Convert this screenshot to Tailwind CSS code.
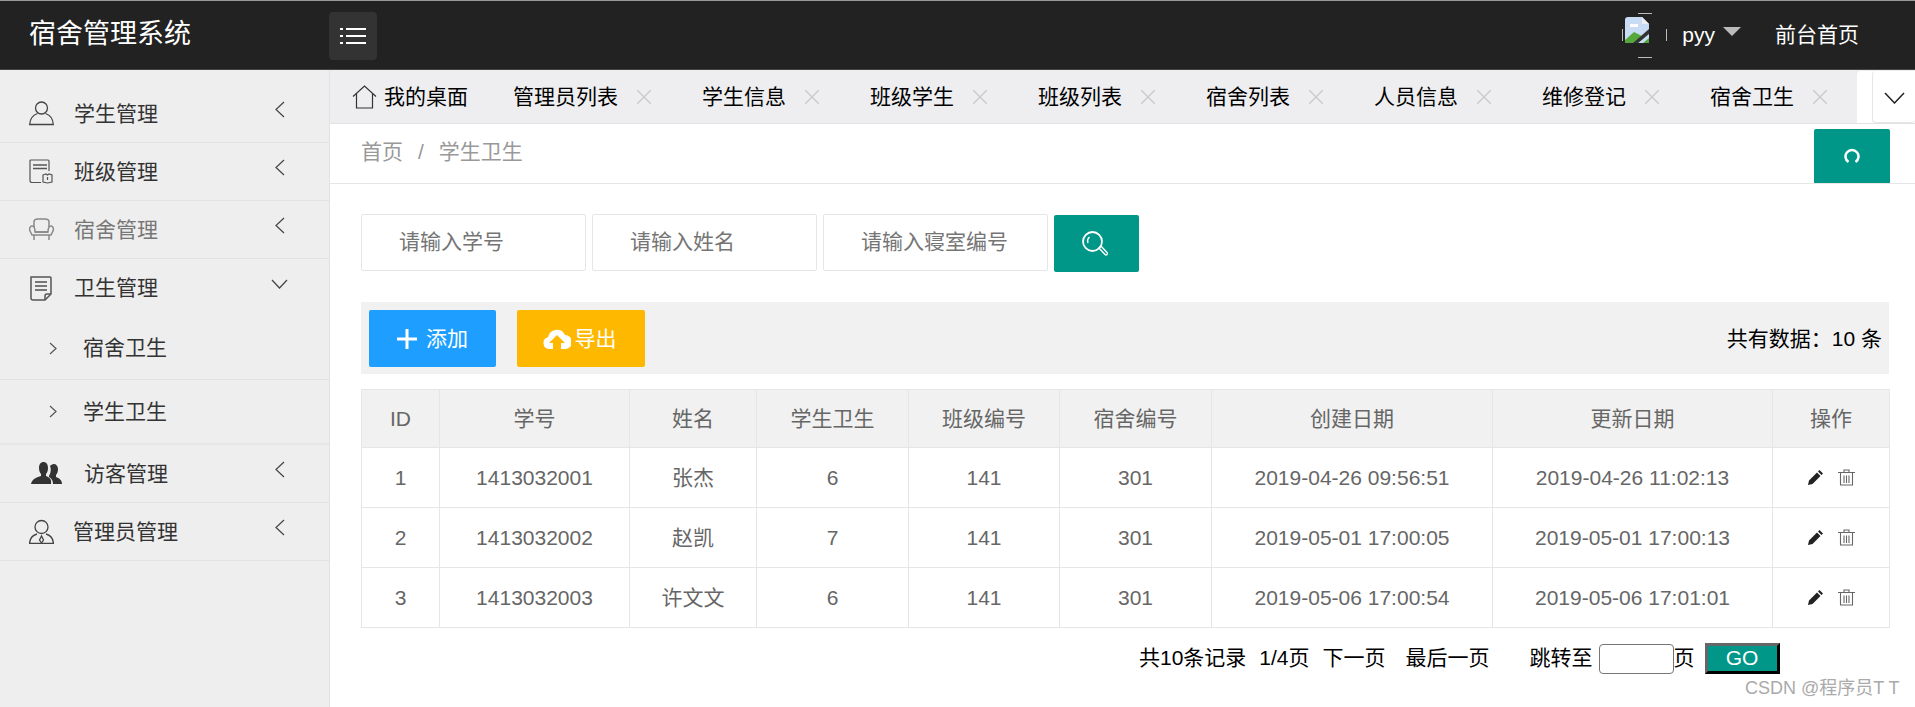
<!DOCTYPE html>
<html lang="zh-CN">
<head>
    <meta charset="UTF-8">
    <title>宿舍管理系统</title>
    <script src="https://cdn.jsdelivr.net/npm/@tailwindcss/browser@4"></script>
</head>
<body class="h-screen w-[1915px] overflow-hidden bg-white text-[21px] text-[#333] font-['Liberation_Sans','Noto_Sans_CJK_SC',sans-serif]">
    <!-- Header -->
    <header class="h-[70px] flex items-center bg-[#222] border-t border-t-[#999] border-b border-b-[#444] text-white">
        <div class="w-[329px] pl-[29px] text-[27px] leading-none mb-[2px]">宿舍管理系统</div>
        <button class="w-[48px] h-[48px] mt-[2px] rounded bg-[#333] flex items-center justify-center">
            <svg width="26" height="18" viewBox="0 0 26 18" fill="none" stroke="#fff" stroke-width="2"><path d="M0 2h3M6 2h20M0 9h3M6 9h20M0 16h3M6 16h20"/></svg>
        </button>
        <div class="ml-auto flex items-center">
            <svg width="45" height="45" viewBox="0 0 45 45" fill="none">
                <path d="M16 .5h14M16 44.500h14M.5 16v12M44.500 16v12" stroke="#bbb"/>
                <path d="M3 7q0-3 3-3h14l7 7v19H3z" fill="#c9dcf5"/>
                <path d="M8 11h8v3H8z" fill="#fff"/>
                <path d="M20 4l7 7h-7z" fill="#eee"/>
                <path d="M3 27l9-8 6 3 4 3-6 5H3z" fill="#56a83c"/>
                <path d="M27 16L11 30h5l11-9z" fill="#333"/>
                <path d="M21 30l6-5v5z" fill="#56a83c"/>
            </svg>
            <span class="ml-[15px]">pyy</span>
            <span class="ml-[8px] mb-[8px] w-0 h-0 border-x-[9px] border-x-transparent border-t-[9px] border-t-[#bbb]"></span>
            <span class="ml-[34px] mr-[56px]">前台首页</span>
        </div>
    </header>

    <div class="flex h-[637px]">
        <!-- Sidebar -->
        <aside class="w-[330px] shrink-0 pt-[15px] bg-[#eee] border-r border-r-[#e2e2e2]">
            <div class="relative h-[58px] flex items-center pl-[29px] border-b border-b-[#e2e2e2]">
                <svg class="w-[25px] h-[25px]" viewBox="0 0 25 25" fill="none" stroke="#444" stroke-width="1.3"><circle cx="12.500" cy="7" r="6"/><path d="M8.500 12.500C4 14 1 18 .7 23.500h23.600C24 18 21 14 16.500 12.500"/></svg>
                <span class="ml-[20px]">学生管理</span>
                <svg class="absolute left-[275px] top-[16px]" width="10" height="17" viewBox="0 0 10 17" fill="none" stroke="#444" stroke-width="1.2"><path d="M9 1L1 8.500 9 16"/></svg>
            </div>
            <div class="relative h-[58px] flex items-center pl-[29px] border-b border-b-[#e2e2e2]">
                <svg class="w-[25px] h-[25px]" viewBox="0 0 25 25" fill="none" stroke="#555" stroke-width="1.2"><path d="M12 23.500H3q-2 0-2-2V2q0-1 1-1h17q1 0 1 1v10"/><path d="M4 6h14M4 9.500h14" stroke-width="1.500"/><path d="M14 16l3-1 1.500 1 1.500-1 3 1v7l-4.500 1-4.500-1z"/><path d="M18.500 18v3"/></svg>
                <span class="ml-[20px]">班级管理</span>
                <svg class="absolute left-[275px] top-[16px]" width="10" height="17" viewBox="0 0 10 17" fill="none" stroke="#444" stroke-width="1.2"><path d="M9 1L1 8.500 9 16"/></svg>
            </div>
            <div class="relative h-[58px] flex items-center pl-[29px] border-b border-b-[#e2e2e2] text-[#777]">
                <svg class="w-[25px] h-[25px]" viewBox="0 0 25 25" fill="none" stroke="#888" stroke-width="1.500"><path d="M5 10V5q0-3 4-3h7q4 0 4 3v5"/><path d="M6 15c0-3-1-6-3-6s-3 3-2 5l2 4h19l2-4c1-2 0-5-2-5s-3 3-3 6z"/><path d="M6 15h13M5 18v5M20 18v5"/></svg>
                <span class="ml-[20px]">宿舍管理</span>
                <svg class="absolute left-[275px] top-[16px]" width="10" height="17" viewBox="0 0 10 17" fill="none" stroke="#444" stroke-width="1.2"><path d="M9 1L1 8.500 9 16"/></svg>
            </div>
            <div class="relative h-[58px] flex items-center pl-[29px]">
                <svg class="w-[25px] h-[25px]" viewBox="0 0 25 25" fill="none" stroke="#555" stroke-width="1.500"><path d="M2 1h19q1 0 1 1v16l-6 6H4q-2 0-2-2z"/><path d="M16 24v-4q0-2 2-2h4"/><path d="M6 6h12M6 10h12M6 14h12" stroke="#777" stroke-width="2"/></svg>
                <span class="ml-[20px]">卫生管理</span>
                <svg class="absolute left-[271px] top-[20px]" width="17" height="10" viewBox="0 0 17 10" fill="none" stroke="#444" stroke-width="1.2"><path d="M1 1l7.500 8L16 1"/></svg>
            </div>
            <div class="h-[63px] flex items-center pl-[49px] border-b border-b-[#e2e2e2]">
                <svg width="8" height="13" viewBox="0 0 8 13" fill="none" stroke="#555" stroke-width="1.2"><path d="M1 1l6 5.500L1 12"/></svg>
                <span class="ml-[26px]">宿舍卫生</span>
            </div>
            <div class="h-[65px] flex items-center pl-[49px] border-b-2 border-b-[#e6e6e6]">
                <svg width="8" height="13" viewBox="0 0 8 13" fill="none" stroke="#555" stroke-width="1.2"><path d="M1 1l6 5.500L1 12"/></svg>
                <span class="ml-[26px]">学生卫生</span>
            </div>
            <div class="relative h-[58px] flex items-center pl-[31px] border-b border-b-[#e2e2e2]">
                <svg class="w-[31px] h-[23px]" viewBox="0 0 31 23" fill="#333"><path d="M20 22c1-5-2-7-5-8v-2c1-1 2-3 2-6 0-4-2-6-4.500-6S8 2 8 6c0 3 1 5 2 6v2c-4 1-9 3-10 8z"/><path d="M22 22h9c0-4-3-6-6-7v-2c1-1 2-3 2-6s-2-5-4-5-3 1-4 2c1 2 1 5 0 8-1 1-1 2-1 3 2 1 4 3 4 7z"/></svg>
                <span class="ml-[22px]">访客管理</span>
                <svg class="absolute left-[275px] top-[16px]" width="10" height="17" viewBox="0 0 10 17" fill="none" stroke="#444" stroke-width="1.2"><path d="M9 1L1 8.500 9 16"/></svg>
            </div>
            <div class="relative h-[58px] flex items-center pl-[29px] border-b border-b-[#e2e2e2]">
                <svg class="w-[25px] h-[25px]" viewBox="0 0 25 25" fill="none" stroke="#444" stroke-width="1.3"><circle cx="12.500" cy="8" r="6.500"/><path d="M8 15c-4 1-7 4-7.500 9.500h24C24 19 21 16 17 15"/><path d="M12.500 17l-2 4 2 3 2-3z"/></svg>
                <span class="ml-[19px]">管理员管理</span>
                <svg class="absolute left-[275px] top-[16px]" width="10" height="17" viewBox="0 0 10 17" fill="none" stroke="#444" stroke-width="1.2"><path d="M9 1L1 8.500 9 16"/></svg>
            </div>
        </aside>

        <!-- Main -->
        <main class="w-[1585px]">
            <!-- Tabs -->
            <div class="relative h-[54px] flex bg-[#eeeef0] border-b border-b-[#e2e2e2] text-black">
                <div class="w-[158px] pl-[22px] flex items-center">
                    <svg width="25" height="24" viewBox="0 0 25 24" fill="none" stroke="#333" stroke-width="1.2"><path d="M1 11.500L12.500 1 24 11.500M4.500 9v14h16V9"/></svg>
                    <span class="ml-[7px]">我的桌面</span>
                </div>
                <div class="pl-[25px] pr-[26px] flex items-center"><span>管理员列表</span><svg class="ml-[19px]" width="14" height="14" viewBox="0 0 14 14" stroke="#ccc" stroke-width="1.500"><path d="M0 0l14 14M14 0L0 14"/></svg></div>
                <div class="pl-[25px] pr-[26px] flex items-center"><span>学生信息</span><svg class="ml-[19px]" width="14" height="14" viewBox="0 0 14 14" stroke="#ccc" stroke-width="1.500"><path d="M0 0l14 14M14 0L0 14"/></svg></div>
                <div class="pl-[25px] pr-[26px] flex items-center"><span>班级学生</span><svg class="ml-[19px]" width="14" height="14" viewBox="0 0 14 14" stroke="#ccc" stroke-width="1.500"><path d="M0 0l14 14M14 0L0 14"/></svg></div>
                <div class="pl-[25px] pr-[26px] flex items-center"><span>班级列表</span><svg class="ml-[19px]" width="14" height="14" viewBox="0 0 14 14" stroke="#ccc" stroke-width="1.500"><path d="M0 0l14 14M14 0L0 14"/></svg></div>
                <div class="pl-[25px] pr-[26px] flex items-center"><span>宿舍列表</span><svg class="ml-[19px]" width="14" height="14" viewBox="0 0 14 14" stroke="#ccc" stroke-width="1.500"><path d="M0 0l14 14M14 0L0 14"/></svg></div>
                <div class="pl-[25px] pr-[26px] flex items-center"><span>人员信息</span><svg class="ml-[19px]" width="14" height="14" viewBox="0 0 14 14" stroke="#ccc" stroke-width="1.500"><path d="M0 0l14 14M14 0L0 14"/></svg></div>
                <div class="pl-[25px] pr-[26px] flex items-center"><span>维修登记</span><svg class="ml-[19px]" width="14" height="14" viewBox="0 0 14 14" stroke="#ccc" stroke-width="1.500"><path d="M0 0l14 14M14 0L0 14"/></svg></div>
                <div class="pl-[25px] pr-[26px] flex items-center"><span>宿舍卫生</span><svg class="ml-[19px]" width="14" height="14" viewBox="0 0 14 14" stroke="#ccc" stroke-width="1.500"><path d="M0 0l14 14M14 0L0 14"/></svg></div>
                <div class="absolute right-0 top-[1px] h-[52px] w-[58px] bg-white flex justify-end rounded-tl">
                    <div class="w-[43px] h-full border-l border-b border-[#e6e6e6] rounded flex items-center justify-center pt-[3px]">
                        <svg width="21" height="12" viewBox="0 0 21 12" fill="none" stroke="#222" stroke-width="1.500"><path d="M1 1l9.500 10L20 1"/></svg>
                    </div>
                </div>
            </div>

            <!-- Breadcrumb -->
            <div class="relative h-[60px] flex items-center pl-[31px] pb-[4px] border-b border-b-[#e6e6e6] text-[#999]">
                <span>首页</span><span class="mx-[15px]">/</span><span>学生卫生</span>
                <a class="absolute right-[25px] top-[5px] w-[76px] h-[54px] rounded-t-[2px] bg-[#009688] flex items-center justify-center">
                    <svg width="16" height="16" viewBox="0 0 16 16" fill="none" stroke="#fff" stroke-width="2.500"><path d="M4.500 14A6.500 6.500 0 1 1 11.500 14"/></svg>
                </a>
            </div>

            <div class="pl-[31px] pr-[26px]">
                <!-- Search -->
                <div class="flex pt-[30px] gap-[6px]">
                    <div class="w-[225px] h-[57px] flex items-center pl-[37px] pb-[1px] border border-[#e6e6e6] rounded-[2px] text-[#757575]">请输入学号</div>
                    <div class="w-[225px] h-[57px] flex items-center pl-[37px] pb-[1px] border border-[#e6e6e6] rounded-[2px] text-[#757575]">请输入姓名</div>
                    <div class="w-[225px] h-[57px] flex items-center pl-[37px] pb-[1px] border border-[#e6e6e6] rounded-[2px] text-[#757575]">请输入寝室编号</div>
                    <button class="w-[85px] h-[57px] mt-[1px] rounded-[2px] bg-[#009688] flex items-center justify-center pr-[3px]">
                        <svg width="26" height="25" viewBox="0 0 26 25" fill="none" stroke="#fff"><circle cx="10.500" cy="10.500" r="9.500" stroke-width="1.800"/><path d="M6 12a5.500 5.500 0 0 1 1.500-6" stroke-width="1.500"/><path d="M17 17l2-2 6 6.500a1.400 1.400 0 0 1-2 2z" stroke-width="1.400"/></svg>
                    </button>
                </div>

                <!-- Toolbar -->
                <div class="mt-[30px] h-[72px] pl-[8px] pr-[7px] flex items-center bg-[#f1f1f1] text-black">
                    <button class="w-[127px] h-[57px] pt-[1px] rounded-[2px] bg-[#1e9fff] text-white flex items-center justify-center">
                        <svg width="20" height="20" viewBox="0 0 20 20" fill="#fff"><path d="M8.500 0h3v8.500H20v3h-8.500V20h-3v-8.500H0v-3h8.500z"/></svg>
                        <span class="ml-[9px]">添加</span>
                    </button>
                    <button class="ml-[21px] w-[128px] h-[57px] pt-[1px] pr-[3px] rounded-[2px] bg-[#ffb800] text-white flex items-center justify-center">
                        <svg width="28" height="20" viewBox="0 0 28 20" fill="#fff"><path d="M6 20a6 6 0 0 1-1-11.800A9 9 0 0 1 22 6a7 7 0 0 1 0 14h-4v-6h4l-8-8-8 8h4v6z"/></svg>
                        <span class="ml-[4px]">导出</span>
                    </button>
                    <span class="ml-auto pt-[2px]">共有数据：10 条</span>
                </div>

                <!-- Table -->
                <table class="mt-[15px] w-[1528px] table-fixed border-collapse text-[#666] text-center">
                    <colgroup>
                        <col class="w-[78px]"><col class="w-[190px]"><col class="w-[127px]"><col class="w-[152px]"><col class="w-[151px]"><col class="w-[152px]"><col class="w-[281px]"><col class="w-[280px]"><col class="w-[117px]">
                    </colgroup>
                    <thead class="bg-[#f1f1f1]">
                        <tr class="h-[58px]">
                            <th class="font-normal border border-[#e6e6e6]">ID</th>
                            <th class="font-normal border border-[#e6e6e6]">学号</th>
                            <th class="font-normal border border-[#e6e6e6]">姓名</th>
                            <th class="font-normal border border-[#e6e6e6]">学生卫生</th>
                            <th class="font-normal border border-[#e6e6e6]">班级编号</th>
                            <th class="font-normal border border-[#e6e6e6]">宿舍编号</th>
                            <th class="font-normal border border-[#e6e6e6]">创建日期</th>
                            <th class="font-normal border border-[#e6e6e6]">更新日期</th>
                            <th class="font-normal border border-[#e6e6e6]">操作</th>
                        </tr>
                    </thead>
                    <tbody>
                        <tr class="h-[60px]">
                            <td class="border border-[#e6e6e6]">1</td><td class="border border-[#e6e6e6]">1413032001</td><td class="border border-[#e6e6e6]">张杰</td><td class="border border-[#e6e6e6]">6</td><td class="border border-[#e6e6e6]">141</td><td class="border border-[#e6e6e6]">301</td><td class="border border-[#e6e6e6]">2019-04-26 09:56:51</td><td class="border border-[#e6e6e6]">2019-04-26 11:02:13</td>
                            <td class="border border-[#e6e6e6]"><div class="flex justify-center gap-[14px]">
                                <svg width="16" height="16" viewBox="0 0 16 16" fill="#222"><path d="M11.500 1l3.500 3.500-1.500 1.500L10 2.500zM9 3.500L12.500 7l-8 8L0 16l1-4.500z"/></svg>
                                <svg width="17" height="17" viewBox="0 0 17 17" fill="none" stroke="#666" stroke-width="1.100"><path d="M0 3.500h17M6 3V1h5v2M2.500 4v12h12V4M6 6.500V14M8.500 6.500V14M11 6.500V14"/></svg>
                            </div></td>
                        </tr>
                        <tr class="h-[60px]">
                            <td class="border border-[#e6e6e6]">2</td><td class="border border-[#e6e6e6]">1413032002</td><td class="border border-[#e6e6e6]">赵凯</td><td class="border border-[#e6e6e6]">7</td><td class="border border-[#e6e6e6]">141</td><td class="border border-[#e6e6e6]">301</td><td class="border border-[#e6e6e6]">2019-05-01 17:00:05</td><td class="border border-[#e6e6e6]">2019-05-01 17:00:13</td>
                            <td class="border border-[#e6e6e6]"><div class="flex justify-center gap-[14px]">
                                <svg width="16" height="16" viewBox="0 0 16 16" fill="#222"><path d="M11.500 1l3.500 3.500-1.500 1.500L10 2.500zM9 3.500L12.500 7l-8 8L0 16l1-4.500z"/></svg>
                                <svg width="17" height="17" viewBox="0 0 17 17" fill="none" stroke="#666" stroke-width="1.100"><path d="M0 3.500h17M6 3V1h5v2M2.500 4v12h12V4M6 6.500V14M8.500 6.500V14M11 6.500V14"/></svg>
                            </div></td>
                        </tr>
                        <tr class="h-[60px]">
                            <td class="border border-[#e6e6e6]">3</td><td class="border border-[#e6e6e6]">1413032003</td><td class="border border-[#e6e6e6]">许文文</td><td class="border border-[#e6e6e6]">6</td><td class="border border-[#e6e6e6]">141</td><td class="border border-[#e6e6e6]">301</td><td class="border border-[#e6e6e6]">2019-05-06 17:00:54</td><td class="border border-[#e6e6e6]">2019-05-06 17:01:01</td>
                            <td class="border border-[#e6e6e6]"><div class="flex justify-center gap-[14px]">
                                <svg width="16" height="16" viewBox="0 0 16 16" fill="#222"><path d="M11.500 1l3.500 3.500-1.500 1.500L10 2.500zM9 3.500L12.500 7l-8 8L0 16l1-4.500z"/></svg>
                                <svg width="17" height="17" viewBox="0 0 17 17" fill="none" stroke="#666" stroke-width="1.100"><path d="M0 3.500h17M6 3V1h5v2M2.500 4v12h12V4M6 6.500V14M8.500 6.500V14M11 6.500V14"/></svg>
                            </div></td>
                        </tr>
                    </tbody>
                </table>

                <!-- Pagination -->
                <div class="mt-[15px] h-[31px] flex items-center text-black">
                    <span class="ml-[778px] mb-[2px]">共10条记录</span>
                    <span class="ml-[13px] mb-[2px]">1/4页</span>
                    <span class="ml-[13px] mb-[2px]">下一页</span>
                    <span class="ml-[20px] mb-[2px]">最后一页</span>
                    <span class="ml-[40px] mb-[2px]">跳转至</span>
                    <div class="ml-[6px] w-[75px] h-[30px] rounded-[4px] border border-[#767676]"></div>
                    <span class="mb-[2px]">页</span>
                    <button class="ml-[10px] w-[75px] h-[31px] pb-[2px] flex items-center justify-center leading-none bg-[#009688] text-white text-[21px] border-[3px] border-t-[#666] border-l-[#666] border-r-black border-b-black">GO</button>
                </div>
            </div>
        </main>
    </div>
    <!-- Watermark -->
    <div class="absolute left-[1745px] top-[675px] text-[18px] text-[#aaa]">CSDN @程序员T T</div>
</body>
</html>
